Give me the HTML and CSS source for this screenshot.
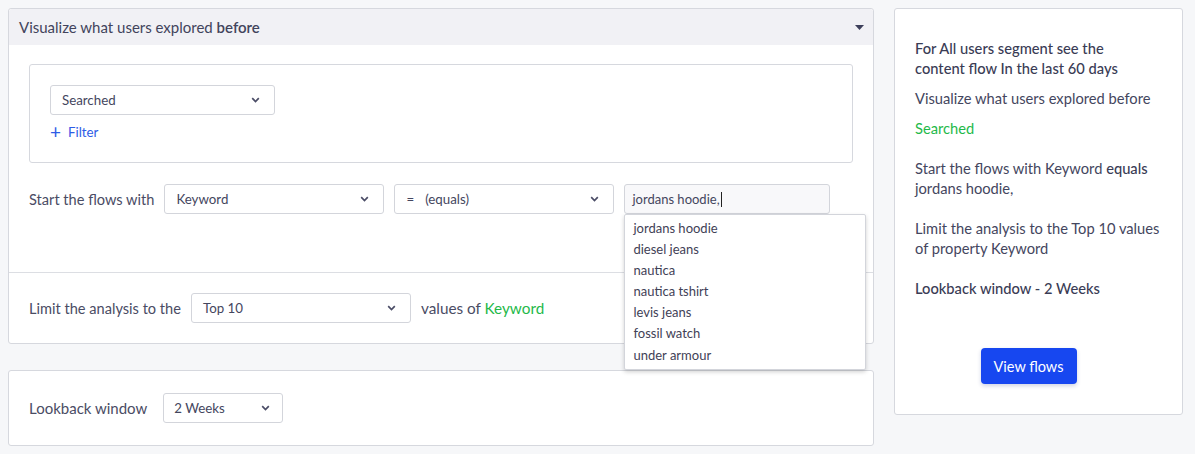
FILE: index.html
```html
<!DOCTYPE html>
<html>
<head>
<meta charset="utf-8">
<link rel="stylesheet" href="styles.css">
</head>
<body>
<div class="page">
  <div class="left">
    <section class="panel main">
      <header class="panel-head">
        <span>Visualize what users explored <b>before</b></span>
        <svg class="caret" width="9" height="5" viewBox="0 0 9 5"><path d="M0 0h9L4.5 5z" fill="#3d3f5a"/></svg>
      </header>
      <div class="panel-body">
        <div class="filter-box">
          <div class="select w-searched"><span>Searched</span><svg class="chev" width="9" height="6" viewBox="0 0 9 6"><path d="M1.2 1.2l3.3 3.3 3.3-3.3" fill="none" stroke="#4a4c66" stroke-width="1.7"/></svg></div>
          <div class="add-filter"><span class="plus">+</span>Filter</div>
        </div>
        <div class="row start-row">
          <span class="label">Start the flows with</span>
          <div class="select w-key"><span>Keyword</span><svg class="chev" width="9" height="6" viewBox="0 0 9 6"><path d="M1.2 1.2l3.3 3.3 3.3-3.3" fill="none" stroke="#4a4c66" stroke-width="1.7"/></svg></div>
          <div class="select w-eq"><span><span class="eq">=</span>(equals)</span><svg class="chev" width="9" height="6" viewBox="0 0 9 6"><path d="M1.2 1.2l3.3 3.3 3.3-3.3" fill="none" stroke="#4a4c66" stroke-width="1.7"/></svg></div>
          <div class="input-wrap">
            <div class="input">jordans hoodie,<span class="cursor"></span></div>
            <ul class="dropdown">
              <li>jordans hoodie</li>
              <li>diesel jeans</li>
              <li>nautica</li>
              <li>nautica tshirt</li>
              <li>levis jeans</li>
              <li>fossil watch</li>
              <li>under armour</li>
            </ul>
          </div>
        </div>
      </div>
      <div class="panel-foot row">
        <span class="label">Limit the analysis to the</span>
        <div class="select w-key"><span>Top 10</span><svg class="chev" width="9" height="6" viewBox="0 0 9 6"><path d="M1.2 1.2l3.3 3.3 3.3-3.3" fill="none" stroke="#4a4c66" stroke-width="1.7"/></svg></div>
        <span class="label">values of <span class="green">Keyword</span></span>
      </div>
    </section>
    <section class="panel lookback">
      <div class="row">
        <span class="label lb-label">Lookback window</span>
        <div class="select w-weeks"><span>2 Weeks</span><svg class="chev" width="9" height="6" viewBox="0 0 9 6"><path d="M1.2 1.2l3.3 3.3 3.3-3.3" fill="none" stroke="#4a4c66" stroke-width="1.7"/></svg></div>
      </div>
    </section>
  </div>
  <aside class="summary">
    <p class="strong">For All users segment see the<br>content flow In the last 60 days</p>
    <p class="tight">Visualize what users explored before</p>
    <p class="green tight">Searched</p>
    <p class="gap">Start the flows with Keyword <span class="med">equals</span> jordans hoodie,</p>
    <p class="gap">Limit the analysis to the Top 10 values of property Keyword</p>
    <p class="gap strong">Lookback window - 2 Weeks</p>
    <div class="btn-row"><button class="btn">View flows</button></div>
  </aside>
</div>
</body>
</html>
```

FILE: styles.css
```css
* { box-sizing: border-box; }
html, body { margin: 0; padding: 0; }
body {
  background: #f6f7f9;
  font-family: Lato, "Open Sans", sans-serif;
  color: #43455e;
  font-size: 14px;
}
.page {
  display: flex;
  gap: 20px;
  padding: 8px;
  width: 1195px;
  height: 454px;
}
.left {
  width: 866px;
  display: flex;
  flex-direction: column;
  gap: 26px;
}
.panel {
  background: #fff;
  border: 1px solid #d6d8de;
  border-radius: 3px;
}
.main { height: 337px; display: flex; flex-direction: column; }
.panel-head {
  height: 36px;
  background: #f1f1f5;
  display: flex;
  align-items: center;
  justify-content: space-between;
  padding: 0 9px 0 10px;
  font-size: 15px;
  color: #42445c;
  border-radius: 3px 3px 0 0;
}
.panel-head b { font-weight: 600; }
.caret { margin-top: 1px; }
.panel-body {
  padding: 19px 20px 0 20px;
  height: 228px;
  border-bottom: 1px solid #dcdee3;
}
.filter-box {
  border: 1px solid #d6d8de;
  border-radius: 3px;
  height: 99px;
  padding: 20px 20px 0 20px;
}
.select {
  height: 30px;
  border: 1px solid #d3d5db;
  border-radius: 3px;
  background: #fff;
  display: flex;
  align-items: center;
  justify-content: space-between;
  padding: 0 14px 0 11px;
  font-size: 13.3px;
  color: #44465e;
  flex: none;
}
.w-searched { width: 225px; }
.w-key { width: 220px; }
.w-eq { width: 220px; }
.w-weeks { width: 120px; padding-right: 12px; padding-left: 10px; }
.eq { margin-right: 11px; margin-left: 0; }
.add-filter {
  margin-top: 7px;
  color: #2e5ce6;
  font-size: 13.3px;
  display: flex;
  align-items: center;
  height: 20px;
}
.plus { font-size: 19px; font-weight: 400; margin-right: 7px; line-height: 1; margin-top: -2px; }
.row {
  display: flex;
  align-items: center;
  gap: 10px;
}
.start-row { margin-top: 21px; }
.label { font-size: 14.6px; color: #4a4c64; white-space: nowrap; }
.lb-label { margin-right: 6px; font-size: 15px; }
.input-wrap { position: relative; width: 206px; height: 30px; }
.input {
  height: 30px;
  border: 1px solid #d3d5db;
  border-radius: 3px;
  background: #f8f8fa;
  font-size: 13px;
  color: #44465e;
  display: flex;
  align-items: center;
  padding-left: 7px;
}
.cursor { display: inline-block; width: 1px; height: 15px; background: #222; margin-left: 1px; }
.dropdown {
  position: absolute;
  top: 30px;
  left: 0;
  width: 242px;
  margin: 0;
  padding: 3px 0 3px;
  list-style: none;
  background: #fff;
  border: 1px solid #d3d5db;
  border-radius: 2px;
  box-shadow: 0 2px 4px rgba(0,0,0,0.18);
  z-index: 5;
}
.dropdown li {
  height: 21.1px;
  line-height: 21px;
  padding-left: 8px;
  font-size: 13px;
  color: #3f4156;
}
.panel-foot {
  flex: 1;
  padding: 0 20px;
}
.panel-foot .label:last-child { font-size: 15.3px; }
.green { color: #1fb94a; }
.lookback {
  height: 76px;
  padding: 0 20px;
  display: flex;
  align-items: center;
}
.summary {
  width: 289px;
  height: 407px;
  background: #fff;
  border: 1px solid #d6d8de;
  border-radius: 3px;
  padding: 29px 16px 0 20px;
  display: flex;
  flex-direction: column;
}
.summary p {
  margin: 0;
  line-height: 20px;
  font-size: 14.7px;
  color: #44465e;
}
.summary .strong, .summary .med { font-weight: 500; color: #3a3c55; }
.summary .tight { margin-top: 10px; }
.summary .gap { margin-top: 20px; }
.summary p.green { color: #1fb94a; }
.btn-row { display: flex; justify-content: center; margin-top: 50px; }
.btn {
  width: 96px;
  height: 36px;
  background: #1747f0;
  color: #fff;
  border: none;
  border-radius: 4px;
  font-family: Lato, "Open Sans", sans-serif;
  font-size: 14.5px;
  box-shadow: 0 2px 4px rgba(20,40,120,0.2);
  margin-right: 24px;
}
```
